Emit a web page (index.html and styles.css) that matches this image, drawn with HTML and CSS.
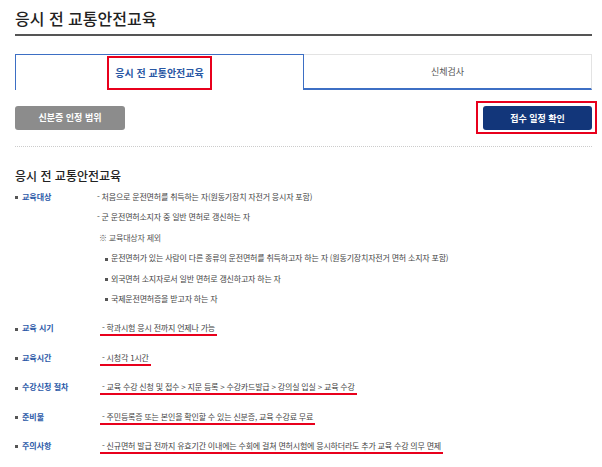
FILE: index.html
```html
<!DOCTYPE html>
<html lang="ko">
<head>
  <meta charset="UTF-8">
  <meta name="viewport" content="width=device-width, initial-scale=1">
  <title>응시 전 교통안전교육</title>
  <link rel="stylesheet" href="styles.css">
</head>
<body>
  <div class="page">
    <h1 class="page-title">응시 전 교통안전교육</h1>

    <!-- 탭 -->
    <ul class="tabs">
      <li class="tab active"><span class="mark">응시 전 교통안전교육</span></li>
      <li class="tab">신체검사</li>
    </ul>

    <div class="actions">
      <button class="btn btn-gray">신분증 인정 범위</button>
      <span class="mark-box"><button class="btn btn-navy">접수 일정 확인</button></span>
    </div>

    <hr class="dots">

    <h2 class="sec-title">응시 전 교통안전교육</h2>

    <dl class="info">
      <div class="row">
        <dt>교육대상</dt>
        <dd>
          <p>- 처음으로 운전면허를 취득하는 자(원동기장치 자전거 응시자 포함)</p>
          <p>- 군 운전면허소지자 중 일반 면허로 갱신하는 자</p>
          <p class="note">※ 교육대상자 제외</p>
          <ul class="sub">
            <li>운전면허가 있는 사람이 다른 종류의 운전면허를 취득하고자 하는 자 (원동기장치자전거 면허 소지자 포함)</li>
            <li>외국면허 소지자로서 일반 면허로 갱신하고자 하는 자</li>
            <li>국제운전면허증을 받고자 하는 자</li>
          </ul>
        </dd>
      </div>
      <div class="row">
        <dt>교육 시기</dt>
        <dd><span class="hl">- 학과시험 응시 전까지 언제나 가능</span></dd>
      </div>
      <div class="row">
        <dt>교육시간</dt>
        <dd><span class="hl">- 시청각 1시간</span></dd>
      </div>
      <div class="row">
        <dt>수강신청 절차</dt>
        <dd><span class="hl">- 교육 수강 신청 및 접수 &gt; 지문 등록 &gt; 수강카드발급 &gt; 강의실 입실 &gt; 교육 수강</span></dd>
      </div>
      <div class="row">
        <dt>준비물</dt>
        <dd><span class="hl">- 주민등록증 또는 본인을 확인할 수 있는 신분증, 교육 수강료 무료</span></dd>
      </div>
      <div class="row">
        <dt>주의사항</dt>
        <dd><span class="hl">- 신규면허 발급 전까지 유효기간 이내에는 수회에 걸쳐 면허시험에 응시하더라도 추가 교육 수강 의무 면제</span></dd>
      </div>
    </dl>
  </div>
</body>
</html>
```

FILE: styles.css
```css
body {
  margin: 0;
  background-color: #ffffff;
  font-family: "Noto Sans CJK KR", "Noto Sans", sans-serif;
  color: #444;
}

.page {
  width: 577px;
  margin-left: 15px;
}

.page-title {
  margin: 0;
  padding: 8px 0 6px;
  font-size: 16px;
  line-height: 20px;
  font-weight: 500;
  color: #222;
  border-bottom: 2px solid #555;
}

/* 탭 */
.tabs {
  display: flex;
  margin: 18px 0 0;
  padding: 0;
  list-style: none;
  height: 36px;
}

.tab {
  flex: 1;
  display: flex;
  align-items: center;
  justify-content: center;
  box-sizing: border-box;
  font-size: 9px;
  color: #555;
  border-top: 1px solid #e3e3e3;
  border-right: 1px solid #e3e3e3;
  border-bottom: 2px solid #3d6fc4;
}

.tab.active {
  border: 1px solid #3d6fc4;
  border-bottom: none;
  color: #2957a4;
  font-size: 10px;
  font-weight: bold;
}

.mark {
  display: inline-block;
  border: 2px solid #e8001c;
  padding: 0 6px;
  line-height: 30px;
}

/* 버튼 */
.actions {
  display: flex;
  justify-content: space-between;
  align-items: center;
  margin-top: 11px;
}

.btn {
  height: 24px;
  border: none;
  border-radius: 3px;
  color: #fff;
  font-family: inherit;
  font-size: 9px;
  font-weight: bold;
  cursor: pointer;
}

.btn-gray {
  width: 110px;
  background-color: #8c8c8c;
}

.btn-navy {
  width: 109px;
  background-color: #12367a;
}

.mark-box {
  display: flex;
  border: 2px solid #e8001c;
  padding: 3px 3px 2px 5px;
  margin-right: -5px;
}

.dots {
  margin: 12px 0 0;
  border: none;
  border-top: 1px dotted #ccc;
}

.sec-title {
  margin: 21px 0 0;
  font-size: 12px;
  line-height: 16px;
  font-weight: 500;
  color: #222;
}

/* 안내 목록 */
.info {
  margin: 3px 0 0;
  font-size: 8px;
  line-height: 20.4px;
  letter-spacing: -0.2px;
}

.row {
  display: grid;
  grid-template-columns: 82px 1fr;
  margin-bottom: 9px;
}

.row dt {
  color: #2c5aa8;
  font-weight: bold;
  letter-spacing: 0;
}

.row dt::before {
  content: "";
  display: inline-block;
  width: 3px;
  height: 3px;
  background-color: #555;
  margin-right: 4px;
  vertical-align: middle;
}

.row dd {
  margin: 0;
}

.row p {
  margin: 0;
}

.row .note {
  padding-left: 2px;
  color: #555;
}

.sub {
  margin: 0;
  padding-left: 8px;
  list-style: none;
}

.sub li::before {
  content: "";
  display: inline-block;
  width: 3px;
  height: 3px;
  background-color: #555;
  margin-right: 3px;
  vertical-align: middle;
}

.hl {
  display: inline-block;
  margin-left: 3px;
  padding: 0 2px;
  line-height: 12px;
  border-bottom: 2px solid #e8001c;
}
```
